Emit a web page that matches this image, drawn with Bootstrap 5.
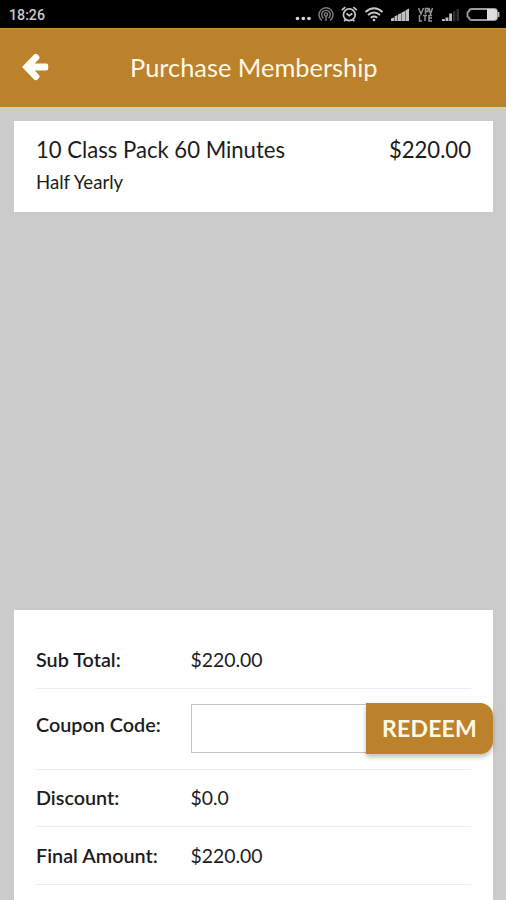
<!DOCTYPE html>
<html lang="en">
<head>
<meta charset="utf-8">
<meta name="viewport" content="width=device-width, initial-scale=1">
<title>Purchase Membership</title>
<link href="https://cdn.jsdelivr.net/npm/bootstrap@5.3.0/dist/css/bootstrap.min.css" rel="stylesheet">
<style>
  body { font-family: Lato, sans-serif; background: #cbcbcb; color: #1c1c1c; }
  .screen { height: 900px; }
  .status-bar { height: 28px; background: #000; color: #c9c9c9; font: 500 14.2px/30px Roboto, sans-serif; padding-left: 9px; }
  .app-bar { height: 79px; background: #bb812b; border-top: 1px solid #c98f3e; padding: 0 0 2px 22px; }
  .app-title { color: #fff8e4; font-size: 25.4px; line-height: 30px; margin-left: 81px; }
  .panel-box { margin: 0 13px 0 14px; padding: 0 22px; border-radius: 0; border: 0; background: #fff; color: #1c1c1c; }
  .pack { height: 91px; margin-top: 14px; padding-top: 15px; }
  .pack-name { font-size: 22.1px; line-height: 28px; }
  .pack-term { font-size: 18.6px; line-height: 22px; margin-top: 7px; }
  .totals { height: 290px; padding-top: 20px; }
  .total-row { height: 58px; border-bottom: 1px solid #ececec; font-size: 19.4px; line-height: 24px; }
  .total-row dt { width: 154.5px; font-weight: 600; font-size: 19.8px; padding-bottom: 2px; }
  .total-row.first-row { height: 59px; padding-top: 1px; }
  .total-row.coupon-row { height: 81px; padding-bottom: 2px; }
  .total-row.discount-row { height: 57px; padding-bottom: 1px; }
  .coupon-group { width: 302.5px; margin-right: -22px; }
  .coupon-input { height: 49px; border: 1px solid #c4c4c4; border-radius: 0; }
  .redeem { width: 127px; height: 51px; padding: 0; border: 0; border-radius: 0 13px 13px 0; background: #bb812b; color: #fff8e4; font-size: 23px; font-weight: 700; letter-spacing: .2px; box-shadow: 0 3px 5px rgba(0,0,0,.25); }
</style>
</head>
<body>
<div class="screen d-flex flex-column overflow-hidden">
  <div class="status-bar d-flex justify-content-between flex-shrink-0">
    <span class="clock">18:26</span>
    <svg width="216" height="28" viewBox="0 0 216 28" fill="none" stroke="#b8b8b8" stroke-width="1.5" aria-hidden="true">
      <g fill="#d8d8d8" stroke="none"><circle cx="7.5" cy="18.5" r="1.8"/><circle cx="13.3" cy="18.5" r="1.8"/><circle cx="19" cy="18.5" r="1.8"/></g>
      <g stroke="#808080" stroke-width="1.4"><path d="M32 20.5A7 7 0 1 1 40 20.5M33.5 18.2A4.3 4.3 0 1 1 38.5 18.2"/><circle cx="36" cy="14.5" r="1.6"/><path d="M36 16v5"/></g>
      <g stroke="#c8c8c8" stroke-width="1.7"><circle cx="59.3" cy="14.8" r="5.9"/><path d="M56.5 13.5l2.8 2.2 3-2.2M51.8 10.2l3.5-3M66.8 10.2l-3.5-3M55.5 19.5l-1.3 1.8M63 19.5l1.3 1.8"/></g>
      <g stroke="#c8c8c8" stroke-width="2"><path d="M75.5 12q8.5-7.5 17 0M78 15q6-5 12 0M80.8 17.8q3.2-2.5 6.4 0"/><circle cx="84" cy="20" r="1.3" fill="#c8c8c8" stroke="none"/></g>
      <path fill="#c0c0c0" stroke="none" d="M101 21v-2.5l3-1V21zM104.500 21v-4.500l3-1.500v6zM108 21v-6.500l3.200-1.500v8zM111.600 21v-8.500l3.400-1.500v10zM115.400 21V10.500l3.600-2V21z"/>
      <g stroke="#929292" stroke-width="1.5"><path d="M128.500 8l2.500 6 2.500-6M135.500 14V8.500h2.500v3h-2.500M139 8l1.500 6 2-6M129.500 15v6h2.500M133 15.500h4M135 15.500V21M142 15.500h-3V21h3M139 18h3"/></g>
      <path fill="#c0c0c0" stroke="none" d="M152 21v-2h2.800v2zM155.500 21v-3.500h2.900V21zM159.200 21v-7.500h2.800V21z"/><path fill="#303030" stroke="none" d="M163 21V11h2.500v10zM166.500 21V9h2.500v12z"/>
      <path stroke="#9c9c9c" stroke-width="1.8" d="M182 9h22q3 0 3 3v5q0 3-3 3h-22q-3 0-3-2.500l-1.500-.8v-4.400l1.500-.8q0-2.500 3-2.500z"/><path fill="#dedede" stroke="none" d="M197 9h7q3 0 3 3v5q0 3-3 3h-7z"/><path stroke="#bdbdbd" d="M208.700 12v5"/>
    </svg>
  </div>
  <header class="app-bar d-flex align-items-center flex-shrink-0">
    <svg width="27" height="28" viewBox="0 0 27 28" aria-label="Back" role="img"><path fill="#fffdf4" d="M0 14L12.300 1.200Q14 0 15.600 1.400L17 2.900Q18.400 4.500 17 6.100L12.700 10.500H24.400Q26.200 10.500 26.200 12.300V15.700Q26.200 17.500 24.400 17.500H12.700L17 21.900Q18.400 23.500 17 25.100L15.600 26.600Q14 28 12.300 26.800Z"/></svg>
    <h1 class="app-title fw-normal mb-0">Purchase Membership</h1>
  </header>
  <main class="d-flex flex-column flex-grow-1">
    <section class="card panel-box pack">
      <div class="pack-name d-flex justify-content-between"><span>10 Class Pack 60 Minutes</span><span>$220.00</span></div>
      <div class="pack-term">Half Yearly</div>
    </section>
    <section class="card panel-box totals mt-auto">
      <dl class="mb-0">
        <div class="total-row first-row d-flex align-items-center"><dt>Sub Total:</dt><dd class="mb-0">$220.00</dd></div>
        <div class="total-row coupon-row d-flex align-items-center"><dt class="pb-2">Coupon Code:</dt>
          <dd class="coupon-group input-group flex-nowrap flex-shrink-0 align-items-center mb-0"><input class="form-control coupon-input" type="text" aria-label="Coupon code"><button class="btn redeem" type="button">REDEEM</button></dd></div>
        <div class="total-row discount-row d-flex align-items-center"><dt>Discount:</dt><dd class="mb-0">$0.0</dd></div>
        <div class="total-row d-flex align-items-center"><dt>Final Amount:</dt><dd class="mb-0">$220.00</dd></div>
      </dl>
    </section>
  </main>
</div>
<script src="https://cdn.jsdelivr.net/npm/bootstrap@5.3.0/dist/js/bootstrap.bundle.min.js"></script>
</body>
</html>
